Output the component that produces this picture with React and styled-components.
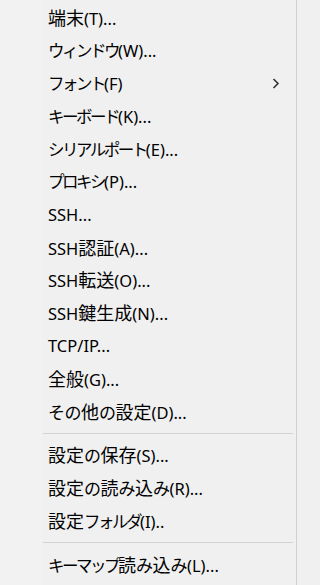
import React from "react";
import styled, { createGlobalStyle } from "styled-components";

const Global = createGlobalStyle`
  html, body { margin: 0; padding: 0; background: #f0f0f0; }
  body { width: 298px; height: 585px; overflow: hidden; }
`;

const Menu = styled.div`
  box-sizing: border-box;
  width: 297px;
  height: 585px;
  padding-top: 1.6px;
  background: linear-gradient(to right, #f2f2f2 0 42px, #f0f0f0 42px);
  border-right: 1px solid #cfcfcf;
  font-family: "Noto Sans", "Noto Sans CJK JP", sans-serif;
  font-size: 16.5px;
  color: #000;
`;

const Item = styled.div`
  display: flex;
  align-items: center;
  justify-content: space-between;
  height: 32.8px;
  padding: 0 16px 0 48px;
  white-space: nowrap;
`;

const Label = styled.span`
  line-height: 20px;
`;

const Script = styled.span`
  font-family: "Noto Sans CJK JP", sans-serif;
  font-size: ${(p) => (p.$kind === "kanji" ? 18 : p.$kind === "hira" ? 17 : 16.5)}px;
  letter-spacing: ${(p) => (p.$kind === "kata" ? -2.5 : p.$kind === "hira" ? -0.5 : 0)}px;
`;

const Separator = styled.div`
  display: flex;
  align-items: center;
  height: 11px;
  padding: 0 3px 0 43px;
  &::after {
    content: "";
    flex: 1;
    height: 1px;
    background: #d3d3d3;
  }
`;

const Chevron = () => (
  <svg width="8" height="11" viewBox="0 0 8 11">
    <path d="M1.5 1 L6 5.5 L1.5 10" fill="none" stroke="#333" strokeWidth="1.6" />
  </svg>
);

const kindOf = (s) =>
  /[\u4e00-\u9fff]/.test(s) ? "kanji" : /[\u3040-\u309f]/.test(s) ? "hira" : /[\u30a0-\u30ff]/.test(s) ? "kata" : null;

const splitRuns = (text) =>
  text
    .split(/([\u4e00-\u9fff]+|[\u3040-\u309f]+|[\u30a0-\u30ff]+)/)
    .filter(Boolean)
    .map((part, i) => {
      const k = kindOf(part);
      return k ? (
        <Script key={i} $kind={k}>
          {part}
        </Script>
      ) : (
        part
      );
    });

const groups = [
  [
    "端末(T)...",
    "ウィンドウ(W)...",
    { label: "フォント(F)", sub: true },
    "キーボード(K)...",
    "シリアルポート(E)...",
    "プロキシ(P)...",
    "SSH...",
    "SSH認証(A)...",
    "SSH転送(O)...",
    "SSH鍵生成(N)...",
    "TCP/IP...",
    "全般(G)...",
    "その他の設定(D)...",
  ],
  ["設定の保存(S)...", "設定の読み込み(R)...", "設定フォルダ(I).."],
  ["キーマップ読み込み(L)..."],
];

export default function App() {
  return (
    <>
      <Global />
      <Menu>
        {groups.map((g, gi) => (
          <React.Fragment key={gi}>
            {gi > 0 && <Separator />}
            {g.map((it, i) => {
              const label = typeof it === "string" ? it : it.label;
              const sub = typeof it === "object" && it.sub;
              return (
                <Item key={i}>
                  <Label>{splitRuns(label)}</Label>
                  {sub && <Chevron />}
                </Item>
              );
            })}
          </React.Fragment>
        ))}
      </Menu>
    </>
  );
}
